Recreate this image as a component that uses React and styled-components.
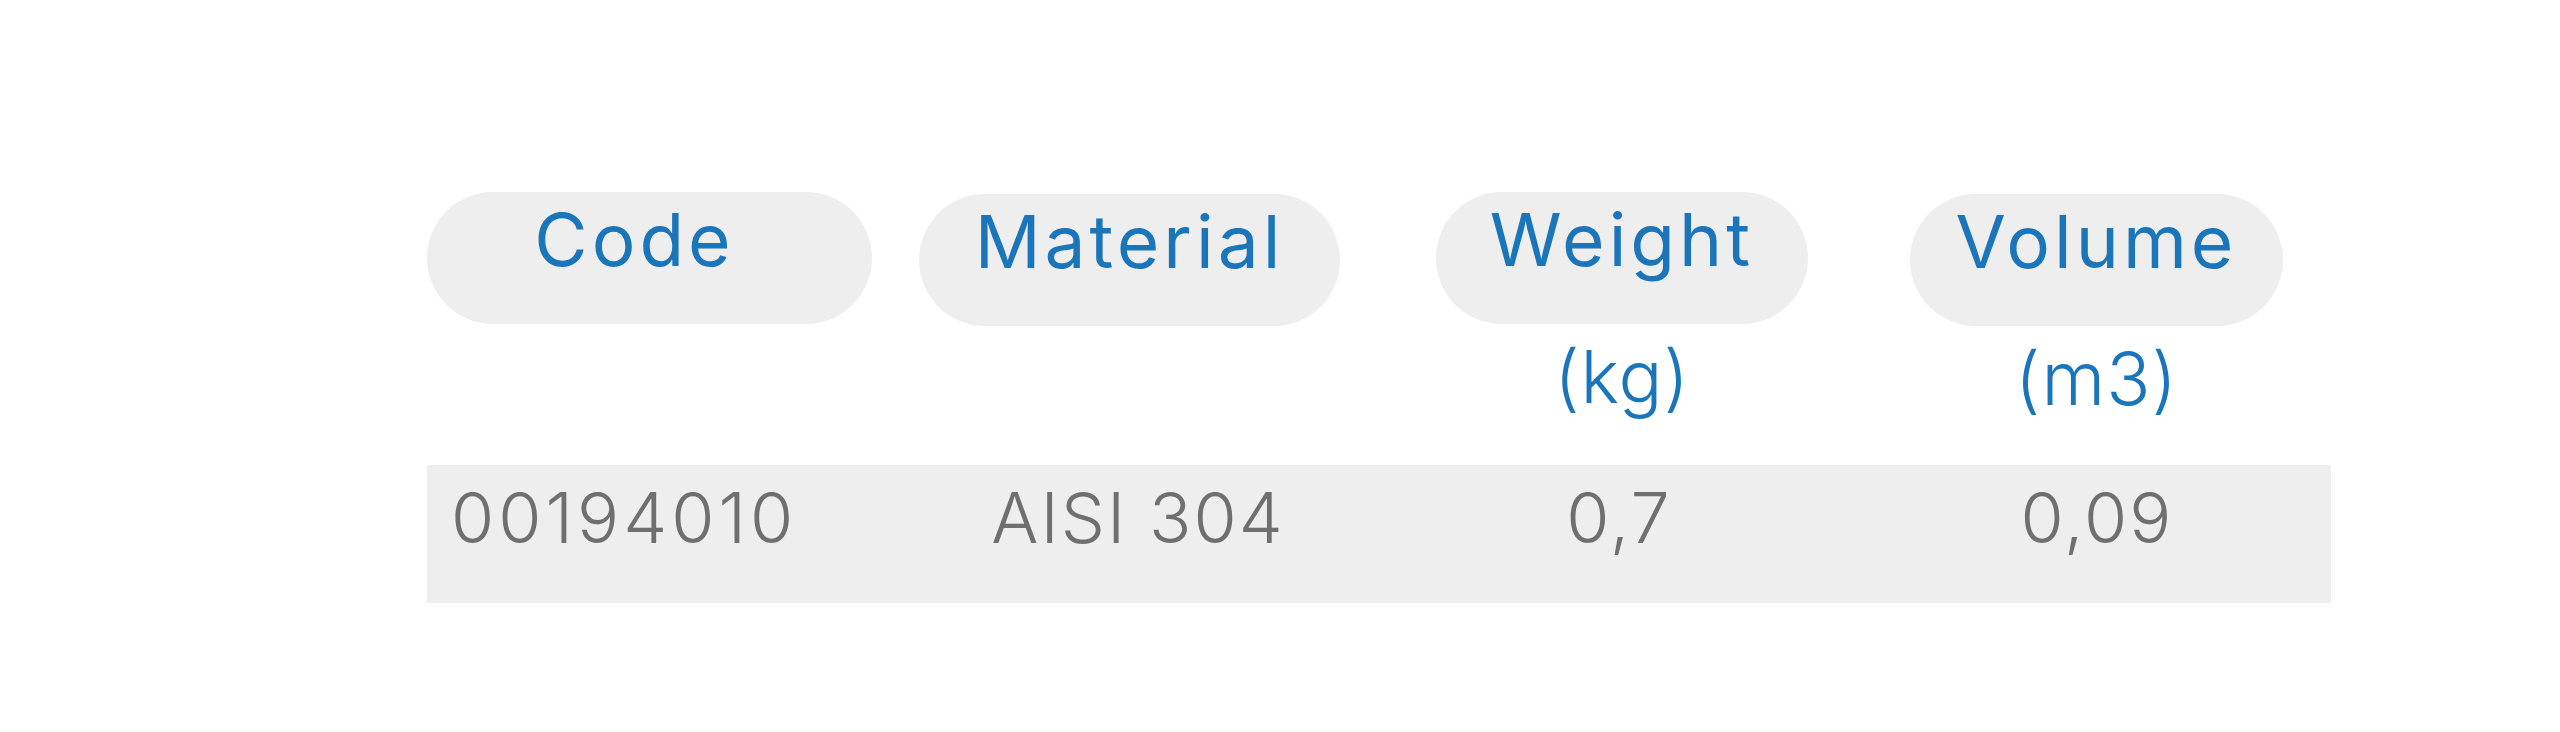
import React from "react";
import styled, { createGlobalStyle } from "styled-components";

const GlobalStyle = createGlobalStyle`
  body {
    margin: 0;
    background: #ffffff;
    font-family: "Inter", "Liberation Sans", sans-serif;
  }
`;

const headers = [
  { label: "Code", width: 445, offset: 0, textShift: -15 },
  { label: "Material", width: 421, offset: 2, gap: 47 },
  { label: "Weight", width: 372, offset: 0, gap: 96, unit: "(kg)" },
  { label: "Volume", width: 373, offset: 2, gap: 102, unit: "(m3)" },
];

const row = ["00194010", "AISI 304", "0,7", "0,09"];

function App() {
  return (
    <>
      <GlobalStyle />
      <Page>
        <HeaderRow>
          {headers.map((h) => (
            <Column key={h.label} width={h.width} gap={h.gap || 0}>
              <Pill offset={h.offset}>
                <PillText shift={h.textShift || 0}>{h.label}</PillText>
              </Pill>
              {h.unit && <Unit>{h.unit}</Unit>}
            </Column>
          ))}
        </HeaderRow>

        <DataRow>
          <CodeCell>{row[0]}</CodeCell>
          <Cell width={460}>{row[1]}</Cell>
          <Cell width={502}>{row[2]}</Cell>
          <Cell width={454}>{row[3]}</Cell>
        </DataRow>
      </Page>
    </>
  );
}

export default App;

const Page = styled.div`
  padding: 192px 0 0 427px;
  height: 732px;
  box-sizing: border-box;
`;

const HeaderRow = styled.div`
  display: flex;
  align-items: flex-start;
`;

const Column = styled.div`
  width: ${(p) => p.width}px;
  margin-left: ${(p) => p.gap}px;
  display: flex;
  flex-direction: column;
  align-items: center;
`;

const Pill = styled.div`
  width: 100%;
  height: 132px;
  margin-top: ${(p) => p.offset}px;
  background: #eeeeee;
  border-radius: 66px;
  display: flex;
  justify-content: center;
  box-sizing: border-box;
  padding-top: 11px;
`;

const PillText = styled.span`
  font-size: 73px;
  line-height: 1;
  font-weight: 400;
  letter-spacing: 4px;
  color: #1a75bb;
  transform: translateX(${(p) => p.shift}px);
`;

const Unit = styled.div`
  margin-top: 16px;
  font-size: 73px;
  line-height: 1;
  font-weight: 300;
  letter-spacing: 1px;
  color: #1a75bb;
`;

const DataRow = styled.div`
  margin-top: 50px;
  width: 1904px;
  height: 138px;
  background: #eeeeee;
  display: flex;
  align-items: flex-start;
  padding: 18px 0 0 24px;
  box-sizing: border-box;
`;

const CodeCell = styled.div`
  width: 457px;
  font-size: 70px;
  line-height: 1;
  font-weight: 300;
  letter-spacing: 4px;
  color: #6f6f6f;
`;

const Cell = styled(CodeCell)`
  width: ${(p) => p.width}px;
  text-align: center;
  letter-spacing: 2px;
`;
